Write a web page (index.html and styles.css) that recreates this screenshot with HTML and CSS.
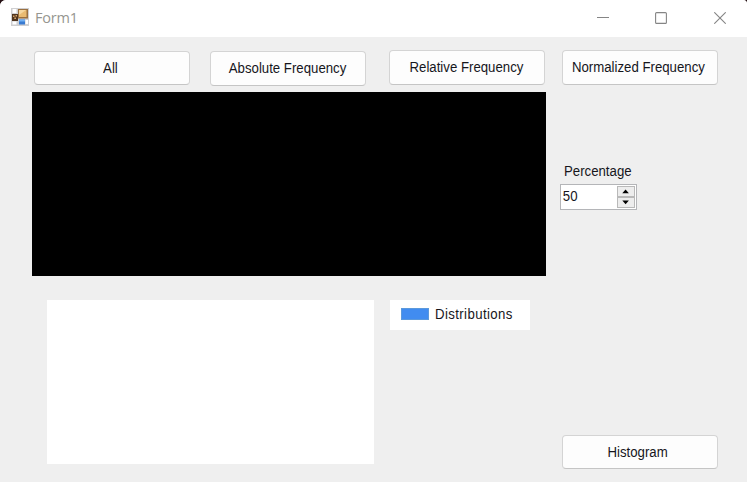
FILE: index.html
```html
<!DOCTYPE html>
<html lang="en">
<head>
<meta charset="utf-8">
<title>Form1</title>
<link rel="stylesheet" href="styles.css">
</head>
<body>
<div class="window">
  <header class="titlebar">
    <svg class="app-icon" width="18" height="18" viewBox="0 0 18 18">
      <rect width="18" height="18" fill="#cfcfd1"/>
      <path d="M1.5 1h4v4h-4zM1.5 13.5h4v3h-4zM14.5 12h2.5v4h-2.5z" fill="#fff"/>
      <rect x="7" y="1" width="10" height="9.5" fill="#9a7040"/>
      <rect x="8" y="2" width="7.5" height="7" fill="#e9bb72"/>
      <path d="M8 2h7l-7 5z" fill="#f5d7a0"/>
      <rect x="1" y="6" width="6" height="7" fill="#50351f"/>
      <path d="M2 7.5h1.5v1.5H2zM4.5 7h1.5v1.5H4.5zM3.3 9.5h1.7v1.5H3.3z" fill="#d6a56c"/>
      <rect x="8" y="11.5" width="6" height="5" fill="#397bd1"/>
      <path d="M8 11.5h6v2H8z" fill="#72b1f3"/>
    </svg>
    <h1 class="title">Form1</h1>
    <div class="controls">
      <svg width="12" height="12" viewBox="0 0 12 12"><path d="M0 5.5h12"/></svg>
      <svg width="12" height="12" viewBox="0 0 12 12"><rect x=".6" y=".6" width="10.8" height="10.8" rx="1"/></svg>
      <svg width="12" height="12" viewBox="0 0 12 12"><path d="M.3.3l11.4 11.4M11.7.3L.3 11.7"/></svg>
    </div>
  </header>
  <main class="form">
    <section class="left">
      <div class="buttons">
        <button class="button all"><span class="text">All</span></button>
        <button class="button absolute"><span class="text">Absolute Frequency</span></button>
        <button class="button relative"><span class="text">Relative Frequency</span></button>
      </div>
      <div class="output"></div>
      <div class="chart">
        <div class="plot"></div>
        <div class="legend"><i class="swatch"></i><span class="text start series">Distributions</span></div>
      </div>
    </section>
    <aside class="right">
      <button class="button normalized"><span class="text">Normalized Frequency</span></button>
      <label class="label text start" for="percentage">Percentage</label>
      <div class="spinner" id="percentage">
        <span class="value text start">50</span>
        <span class="arrows">
          <svg width="18" height="11" viewBox="0 0 18 11"><path d="M4.5 7.500h8l-4-4.500z"/></svg>
          <svg width="18" height="11" viewBox="0 0 18 11"><path d="M4.5 3h8l-4 4.500z"/></svg>
        </span>
      </div>
      <button class="button histogram"><span class="text">Histogram</span></button>
    </aside>
  </main>
</div>
</body>
</html>
```
FILE: styles.css
```css
* { box-sizing: border-box; }
body {
  margin: 0;
  background: #251014;
  font: 15.2px/18px "Liberation Sans", Arial, sans-serif;
  color: #16161c;
}
.window {
  height: 482px;
  display: flex;
  flex-direction: column;
  border-radius: 6px 4px 0 0;
  overflow: hidden;
  background: #efefef;
}
.titlebar {
  height: 37px;
  display: flex;
  align-items: center;
  padding: 0 21px 2px 11px;
  background: #fff;
}
.app-icon { margin-top: -1px; }
.title {
  margin: 0 0 0 6px;
  font: 400 14.5px/20px "Open Sans", sans-serif;
  letter-spacing: -0.2px;
  color: #969690;
}
.controls { display: flex; gap: 46.5px; margin-left: auto; }
.controls svg { fill: none; stroke: #858585; stroke-width: 1.1; }
.controls svg:nth-child(2) { margin: 0 1px 0 -1px; }
.form { flex: 1; display: flex; }
.text {
  display: inline-block;
  transform: scaleX(0.87);
  white-space: nowrap;
}
.start { transform-origin: left; }
.left { width: 514px; margin-left: 32.4px; }
.buttons { height: 55px; display: flex; align-items: flex-start; padding-left: 1.6px; }
.button {
  width: 156px;
  height: 34px;
  flex: none;
  display: flex;
  align-items: center;
  justify-content: center;
  padding: 0;
  border: 1px solid #d4d4d4;
  border-bottom-color: #c5c5c5;
  border-radius: 4px;
  background: #fdfdfd;
  color: inherit;
  font: inherit;
}
.all { margin-top: 14px; padding-right: 3px; }
.absolute { margin: 14px 0 0 20px; height: 35px; padding: 0 1px 1px 0; }
.relative { margin: 12.5px 0 0 23px; height: 35px; padding-right: 2px; }
.output { height: 184px; background: #000; }
.chart { display: flex; align-items: flex-start; gap: 16px; margin: 23.5px 0 0 15px; }
.plot { width: 326.6px; height: 164px; background: #fff; }
.legend {
  width: 140px;
  height: 30px;
  display: flex;
  align-items: center;
  gap: 6px;
  padding: 0 0 1px 11px;
  background: #fff;
}
.swatch { width: 28px; height: 12px; flex: none; background: #418cf0; border: 1px solid #5b99dc; }
.series { letter-spacing: 0.45px; }
.right { display: flex; flex-direction: column; align-items: flex-start; padding: 12.5px 0 13px 15.2px; }
.normalized { height: 35px; padding-right: 3px; }
.label { margin: 77px 0 0 2px; }
.spinner {
  width: 77px;
  height: 26px;
  display: flex;
  justify-content: space-between;
  margin: 4px 0 0 -1.7px;
  padding: 1px;
  border: 1px solid #b4b5b8;
  background: #fff;
}
.value { padding: 1px 0 0 1px; }
.arrows { display: flex; flex-direction: column; }
.arrows svg { background: #ededed; border: 1px solid #b9b9b9; overflow: visible; }
.histogram { margin-top: auto; padding-right: 3px; }
```
